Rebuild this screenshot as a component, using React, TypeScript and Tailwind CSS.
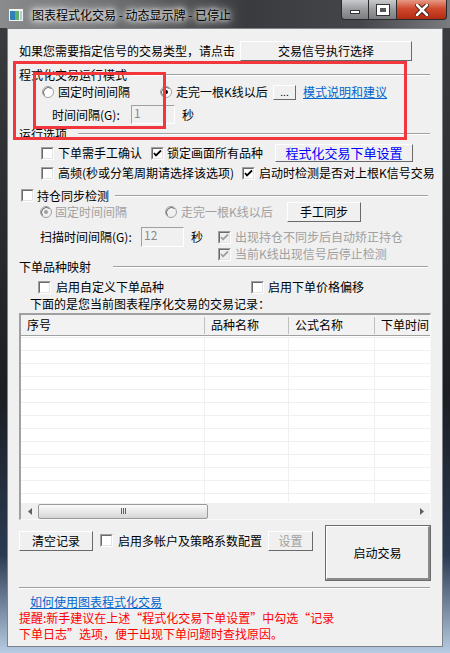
import React from "react";

const FONT = "font-['Noto_Sans_CJK_SC','Noto_Sans',sans-serif]";

function Check({ checked = false, disabled = false }: { checked?: boolean; disabled?: boolean }) {
  return (
    <div className="w-[13px] h-[13px] shrink-0 border-t border-l border-t-[#a0a0a0] border-l-[#a0a0a0] border-r border-b border-r-white border-b-white">
      <div
        className={`w-full h-full border-t border-l border-t-[#696969] border-l-[#696969] border-r border-b border-r-[#e3e3e3] border-b-[#e3e3e3] flex items-center justify-center ${
          disabled ? "bg-[#f0f0f0]" : "bg-white"
        }`}
      >
        {checked && (
          <svg width="9" height="9" viewBox="0 0 9 9">
            <path
              d="M1 4 L3 6.5 L8 1.5"
              fill="none"
              stroke={disabled ? "#a0a0a0" : "#000"}
              strokeWidth="1.8"
            />
          </svg>
        )}
      </div>
    </div>
  );
}

function Radio({ checked = false, disabled = false }: { checked?: boolean; disabled?: boolean }) {
  return (
    <svg width="12" height="12" viewBox="0 0 12 12" className="shrink-0">
      <circle cx="6" cy="6" r="5.5" fill={disabled ? "#f0f0f0" : "#fff"} stroke="#a0a0a0" />
      <path d="M2.5 9.5 A5 5 0 0 1 9.5 2.5" fill="none" stroke="#696969" />
      {checked && <circle cx="6" cy="6" r="2" fill={disabled ? "#a0a0a0" : "#000"} />}
    </svg>
  );
}

function Btn({
  children,
  className = "",
  text = "text-black",
}: {
  children: React.ReactNode;
  className?: string;
  text?: string;
}) {
  return (
    <div
      className={`shrink-0 bg-[#f0f0f0] border border-t-white border-l-white border-r-[#696969] border-b-[#696969] flex items-center justify-center ${text} ${className}`}
    >
      {children}
    </div>
  );
}

function Etch({ w }: { w: string }) {
  return <div className={`h-[2px] border-t border-t-[#a0a0a0] border-b border-b-white ${w}`} />;
}

function Input({ value, w }: { value: string; w: string }) {
  return (
    <div
      className={`${w} h-full shrink-0 bg-[#f0f0f0] border border-t-[#a0a0a0] border-l-[#a0a0a0] border-r-white border-b-white text-[#8a8a8a] pl-[2px] flex items-start pt-[1px] text-[12px]`}
    >
      {value}
    </div>
  );
}

const rowCount = 13;

export default function App() {
  return (
    <div className={`w-[450px] h-[653px] relative overflow-hidden bg-[linear-gradient(180deg,#3b3d40_0%,#1c1e22_60%,#2a3a52_85%,#b7cce2_100%)] ${FONT} text-[12px] leading-[12px] text-black`}>
      {/* title bar */}
      <div className="h-[28px] flex items-start bg-[linear-gradient(90deg,#8a8b8d_0%,#6e6f71_25%,#3a3b3e_55%,#45464a_80%,#7a7b7e_100%)]">
        <svg width="16" height="14" viewBox="0 0 16 14" className="ml-[8px] mt-[8px] shrink-0">
          <rect x="0.5" y="0.5" width="15" height="13" fill="#f4f4f4" stroke="#8a8a8a" />
          <rect x="2" y="3" width="5" height="9" fill="#2f7fb8" />
          <rect x="7" y="3" width="4" height="9" fill="#5fb06a" />
          <rect x="12" y="3" width="2" height="9" fill="#b9c9d9" />
        </svg>
        <div className="ml-[6px] mt-[8px] px-[2px] leading-[14px] text-[12px] text-black whitespace-nowrap [text-shadow:0_0_4px_#fff,0_0_8px_#fff,0_0_12px_#fff]">
          图表程式化交易 - 动态显示牌 - 已停止
        </div>
        <div className="ml-auto mr-[3px] flex h-[20px]">
          <div className="w-[28px] h-[20px] rounded-bl-[4px] border border-t-0 border-[#2a2a2a] bg-[linear-gradient(180deg,#c9cacc_0%,#9a9b9e_50%,#7b7c80_100%)] flex items-center justify-center">
            <div className="w-[10px] h-[4px] mt-[5px] bg-white border border-[#333]" />
          </div>
          <div className="w-[27px] h-[20px] border-y border-t-0 border-[#2a2a2a] bg-[linear-gradient(180deg,#c9cacc_0%,#9a9b9e_50%,#7b7c80_100%)] flex items-center justify-center">
            <div className="w-[12px] h-[10px] border-[3px] border-white outline outline-1 outline-[#333] bg-[#555]" />
          </div>
          <div className="w-[51px] h-[20px] rounded-br-[4px] border border-t-0 border-[#2a2a2a] bg-[linear-gradient(180deg,#e69a86_0%,#d24a2e_45%,#b22b12_100%)] flex items-center justify-center">
            <svg width="14" height="12" viewBox="0 0 14 12">
              <path d="M2 1 L12 11 M12 1 L2 11" stroke="#3a1208" strokeWidth="4.5" strokeLinecap="round" />
              <path d="M2 1 L12 11 M12 1 L2 11" stroke="#fff" strokeWidth="2.6" strokeLinecap="round" />
            </svg>
          </div>
        </div>
      </div>

      {/* client area */}
      <div className="ml-[7px] w-[436px] h-[619px] bg-[#f0f0f0] border border-[#7f8389] relative">
        {/* row A */}
        <div className="flex items-center h-[20px] mt-[12px]">
          <span className="ml-[11px] w-[221px] shrink-0 whitespace-nowrap">如果您需要指定信号的交易类型，请点击</span>
          <Btn className="w-[172px] h-[20px]">交易信号执行选择</Btn>
        </div>

        {/* group 程式化交易运行模式 */}
        <div className="flex items-center h-[14px] mt-[7px]">
          <span className="ml-[11px] w-[112px] shrink-0 whitespace-nowrap">程式化交易运行模式</span>
          <Etch w="w-[299px]" />
        </div>
        <div className="flex items-center h-[16px] mt-[2px]">
          <div className="ml-[34px]"><Radio /></div>
          <span className="ml-[4px] w-[102px] shrink-0 whitespace-nowrap">固定时间间隔</span>
          <Radio checked />
          <span className="ml-[4px] w-[97px] shrink-0 whitespace-nowrap">走完一根K线以后</span>
          <Btn className="w-[23px] h-[15px] text-[10px]">...</Btn>
          <span className="ml-[7px] whitespace-nowrap text-[#0066cc] underline">模式说明和建议</span>
        </div>
        <div className="flex items-center h-[19px] mt-[5px]">
          <span className="ml-[44px] w-[79px] shrink-0 whitespace-nowrap">时间间隔(G):</span>
          <Input value="1" w="w-[44px]" />
          <span className="ml-[7px]">秒</span>
        </div>

        {/* group 运行选项 */}
        <div className="flex items-center h-[14px] mt-[3px]">
          <span className="ml-[11px] w-[59px] shrink-0 whitespace-nowrap">运行选项</span>
          <Etch w="w-[352px]" />
        </div>
        <div className="flex items-center h-[18px] mt-[3px]">
          <div className="ml-[33px]"><Check /></div>
          <span className="ml-[4px] w-[93px] shrink-0 whitespace-nowrap">下单需手工确认</span>
          <Check checked />
          <span className="ml-[3px] w-[108px] shrink-0 whitespace-nowrap">锁定画面所有品种</span>
          <Btn className="w-[138px] h-[18px]" text="text-[#0000ff]">
            <span className="text-[13px]">程式化交易下单设置</span>
          </Btn>
        </div>
        <div className="flex items-center h-[14px] mt-[4px]">
          <div className="ml-[33px]"><Check /></div>
          <span className="ml-[4px] w-[184px] shrink-0 whitespace-nowrap">高频(秒或分笔周期请选择该选项)</span>
          <Check checked />
          <span className="ml-[4px] whitespace-nowrap">启动时检测是否对上根K信号交易</span>
        </div>

        {/* 持仓同步检测 */}
        <div className="flex items-center h-[13px] mt-[9px]">
          <div className="ml-[13px]"><Check /></div>
          <span className="ml-[3px] w-[78px] shrink-0 whitespace-nowrap">持仓同步检测</span>
          <Etch w="w-[313px]" />
        </div>
        <div className="flex items-center h-[20px]">
          <div className="ml-[32px]"><Radio checked disabled /></div>
          <span className="ml-[3px] w-[110px] shrink-0 whitespace-nowrap text-[#a0a0a0]">固定时间间隔</span>
          <Radio disabled />
          <span className="ml-[4px] w-[106px] shrink-0 whitespace-nowrap text-[#a0a0a0]">走完一根K线以后</span>
          <Btn className="w-[74px] h-[20px]">手工同步</Btn>
        </div>
        <div className="flex items-center h-[20px] mt-[5px]">
          <span className="ml-[32px] w-[101px] shrink-0 whitespace-nowrap">扫描时间间隔(G):</span>
          <Input value="12" w="w-[43px]" />
          <span className="ml-[7px] w-[27px] shrink-0">秒</span>
          <Check checked disabled />
          <span className="ml-[4px] whitespace-nowrap text-[#a0a0a0]">出现持仓不同步后自动矫正持仓</span>
        </div>
        <div className="flex items-center h-[14px]">
          <div className="ml-[210px]"><Check checked disabled /></div>
          <span className="ml-[4px] whitespace-nowrap text-[#a0a0a0]">当前K线出现信号后停止检测</span>
        </div>

        {/* 下单品种映射 */}
        <div className="flex items-center h-[12px]">
          <span className="ml-[11px] w-[94px] shrink-0 whitespace-nowrap">下单品种映射</span>
          <Etch w="w-[315px]" />
        </div>
        <div className="flex items-center h-[14px] mt-[7px]">
          <div className="ml-[30px]"><Check /></div>
          <span className="ml-[5px] w-[195px] shrink-0 whitespace-nowrap">启用自定义下单品种</span>
          <Check />
          <span className="ml-[4px] whitespace-nowrap">启用下单价格偏移</span>
        </div>
        <div className="flex items-center h-[14px] mt-[3px]">
          <span className="ml-[22px] whitespace-nowrap">下面的是您当前图表程序化交易的交易记录：</span>
        </div>

        {/* table */}
        <div className="ml-[11px] mt-[2px] w-[412px] h-[207px] border-t-2 border-l-2 border-t-[#a0a0a0] border-l-[#a0a0a0] border-r border-b border-r-[#f8f8f8] border-b-[#f8f8f8] bg-white flex flex-col">
          <div className="h-[21px] flex bg-[#f2f2f2] border-b border-b-[#a0a0a0] shrink-0 items-center">
            <div className="w-[184px] h-[17px] pl-[6px] flex items-center border-r border-r-[#c0c0c0] shrink-0">序号</div>
            <div className="w-[84px] h-[17px] pl-[6px] flex items-center border-r border-r-[#c0c0c0] shrink-0">品种名称</div>
            <div className="w-[86px] h-[17px] pl-[6px] flex items-center border-r border-r-[#c0c0c0] shrink-0">公式名称</div>
            <div className="flex-1 h-[17px] pl-[6px] flex items-center overflow-hidden whitespace-nowrap">下单时间</div>
          </div>
          <div className="flex-1 overflow-hidden pt-[1px]">
            {Array.from({ length: rowCount }).map((_, i) => (
              <div key={i} className="h-[13px] flex border-t border-t-[#f0f0f0]">
                <div className="w-[184px] shrink-0 border-r border-r-[#f0f0f0]" />
                <div className="w-[84px] shrink-0 border-r border-r-[#f0f0f0]" />
                <div className="w-[86px] shrink-0 border-r border-r-[#f0f0f0]" />
                <div className="flex-1" />
              </div>
            ))}
          </div>
          {/* horizontal scrollbar */}
          <div className="h-[17px] shrink-0 bg-[#f0f0f0] border-t border-t-white flex items-center">
            <div className="w-[17px] flex justify-center">
              <svg width="4" height="7" viewBox="0 0 4 7"><path d="M4 0 L0 3.5 L4 7 Z" fill="#606060" /></svg>
            </div>
            <div className="w-[170px] h-[15px] rounded-[2px] border border-[#9a9a9a] bg-[linear-gradient(180deg,#fafafa_0%,#e9e9e9_50%,#d6d6d6_100%)] flex items-center justify-center">
              <div className="flex gap-[1px]">
                <div className="w-[1px] h-[6px] bg-[#606060]" />
                <div className="w-[1px] h-[6px] bg-[#606060]" />
                <div className="w-[1px] h-[6px] bg-[#606060]" />
              </div>
            </div>
            <div className="ml-auto w-[17px] flex justify-center">
              <svg width="4" height="7" viewBox="0 0 4 7"><path d="M0 0 L4 3.5 L0 7 Z" fill="#606060" /></svg>
            </div>
          </div>
        </div>

        {/* bottom controls */}
        <div className="flex items-start mt-[5px]">
          <div className="flex items-center h-[21px] mt-[5px]">
            <Btn className="ml-[11px] w-[74px] h-[20px]">清空记录</Btn>
            <div className="ml-[7px]"><Check /></div>
            <span className="ml-[5px] w-[150px] shrink-0 whitespace-nowrap">启用多帐户及策略系数配置</span>
            <Btn className="w-[45px] h-[20px]" text="text-[#a0a0a0]">设置</Btn>
          </div>
          <div className="ml-[12px] w-[106px] h-[56px] border border-[#6b6b6b] shrink-0">
            <div className="w-full h-full bg-[#f0f0f0] border border-t-white border-l-white border-r-[#8a8a8a] border-b-[#8a8a8a] border-r-2 border-b-2 flex items-center justify-center">
              启动交易
            </div>
          </div>
        </div>

        <div className="ml-[11px] mt-[6px]">
          <Etch w="w-[411px]" />
        </div>

        <div className="flex items-center h-[14px] mt-[6px]">
          <span className="ml-[22px] whitespace-nowrap text-[#0066cc] underline">如何使用图表程式化交易</span>
        </div>

        <div className="ml-[11px] mt-[1px] text-[#ff0000] leading-[16px] whitespace-nowrap">
          <div>提醒:新手建议在上述“程式化交易下单设置”中勾选“记录</div>
          <div>下单日志”选项，便于出现下单问题时查找原因。</div>
        </div>

        {/* annotation overlays */}
        <div className="absolute left-[5px] top-[32px] w-[394px] h-[79px] border-[3px] border-[#f2373c] pointer-events-none" />
        <div className="absolute left-[25px] top-[43px] w-[133px] h-[57px] border-[3px] border-[#f2373c] pointer-events-none" />
      </div>
    </div>
  );
}
